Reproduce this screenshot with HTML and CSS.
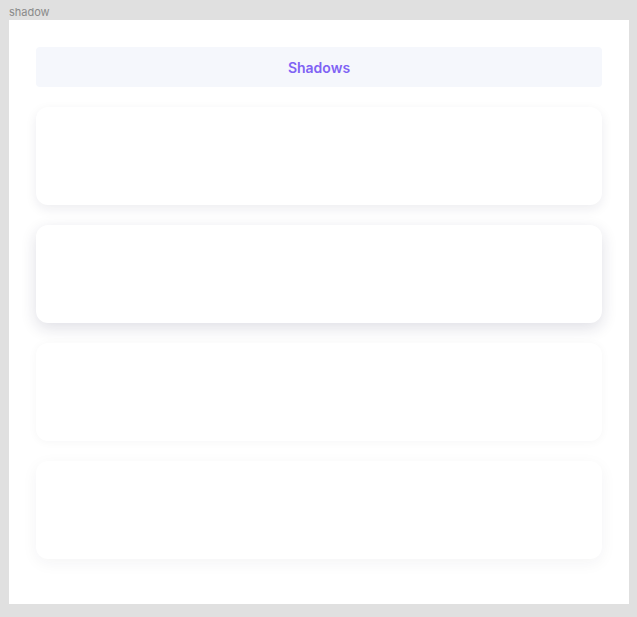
FILE: index.html
```html
<!DOCTYPE html>
<html>
<head>
<meta charset="utf-8">
<link rel="stylesheet" href="styles.css">
</head>
<body>
<div class="label">shadow</div>
<div class="frame">
  <div class="header">Shadows</div>
  <div class="card card-sm"></div>
  <div class="card card-md"></div>
  <div class="card card-xs"></div>
  <div class="card card-soft"></div>
</div>
</body>
</html>
```
FILE: styles.css
```css
html, body {
  margin: 0;
  padding: 0;
  background: #e0e0e0;
  font-family: Inter, "Noto Sans", sans-serif;
}
.label {
  height: 20px;
  padding-left: 9px;
  font-size: 11px;
  line-height: 24px;
  color: #8a8a8a;
  box-sizing: border-box;
}
.frame {
  margin-left: 9px;
  width: 620px;
  height: 584px;
  background: #ffffff;
  box-sizing: border-box;
  padding: 27px 27px 0 27px;
  display: flex;
  flex-direction: column;
  gap: 20px;
}
.header {
  height: 40px;
  background: #f5f7fc;
  border-radius: 4px;
  display: flex;
  align-items: center;
  justify-content: center;
  color: #7f63f4;
  font-weight: 600;
  font-size: 14px;
}
.card {
  height: 98px;
  background: #ffffff;
  border-radius: 12px;
}
.card-sm {
  box-shadow: 0 4px 12px rgba(30, 30, 60, 0.08);
}
.card-md {
  box-shadow: 0 5px 16px rgba(30, 30, 70, 0.14);
}
.card-xs {
  box-shadow: 0 1px 10px rgba(30, 30, 60, 0.04);
}
.card-soft {
  box-shadow: 0 4px 16px rgba(30, 30, 60, 0.05);
}
```
